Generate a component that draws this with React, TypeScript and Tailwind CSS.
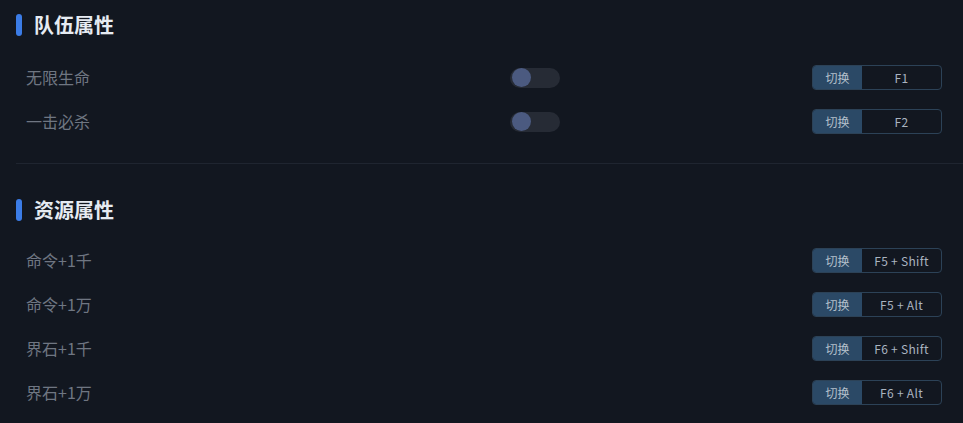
import React from 'react';

type Row = { label: string; hotkey: string; toggle?: boolean };

const sections: { title: string; rows: Row[] }[] = [
  {
    title: '队伍属性',
    rows: [
      { label: '无限生命', hotkey: 'F1', toggle: true },
      { label: '一击必杀', hotkey: 'F2', toggle: true },
    ],
  },
  {
    title: '资源属性',
    rows: [
      { label: '命令+1千', hotkey: 'F5 + Shift' },
      { label: '命令+1万', hotkey: 'F5 + Alt' },
      { label: '界石+1千', hotkey: 'F6 + Shift' },
      { label: '界石+1万', hotkey: 'F6 + Alt' },
    ],
  },
];

const Toggle: React.FC = () => (
  <div className="w-[50px] h-[20px] rounded-full bg-[#262b35] flex items-center px-[2px]">
    <div className="w-[19px] h-[19px] rounded-full bg-[#4b5a80]" />
  </div>
);

const Hotkey: React.FC<{ keys: string }> = ({ keys }) => (
  <div className="flex w-[130px] h-[25px] rounded-[4px] border border-[#2c4257] overflow-hidden text-[12px] leading-none">
    <div className="w-[49px] bg-[#2b4966] text-[#b4c0cc] flex items-center justify-center">切换</div>
    <div className="flex-1 text-[#aab4c0] flex items-center justify-center tracking-[0.3px]">{keys}</div>
  </div>
);

export default function App() {
  return (
    <main
      className="w-[963px] h-[423px] bg-[#121720] overflow-hidden pl-4"
      style={{ fontFamily: '"Noto Sans CJK SC", "Noto Sans", sans-serif' }}
    >
      {sections.map((section, i) => (
        <section key={section.title}>
          {i > 0 && <div className="h-px bg-[#1f2530] mt-[29px] mb-[35px]" />}
          <div className={`flex items-center gap-3 h-[22px] ${i === 0 ? 'mt-[14px]' : ''}`}>
            <div className="w-[6px] h-[22px] rounded-full bg-[#3b7ce6]" />
            <h2 className="text-[20px] font-bold text-[#e6ebf2] leading-none">{section.title}</h2>
          </div>
          <div className={`${i === 0 ? 'mt-[29px]' : 'mt-[27px]'} flex flex-col gap-[19px] pr-[21px]`}>
            {section.rows.map((row) => (
              <div key={row.label} className="flex items-center h-[25px]">
                <span className="w-[494px] pl-[10px] text-[16px] leading-none text-[#6f7682] -translate-y-px">{row.label}</span>
                <div className="flex-1 flex items-center">{row.toggle && <Toggle />}</div>
                <Hotkey keys={row.hotkey} />
              </div>
            ))}
          </div>
        </section>
      ))}
    </main>
  );
}
